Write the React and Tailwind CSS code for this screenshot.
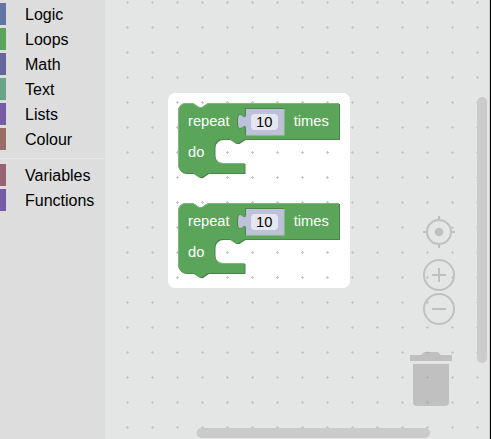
const categories = [
  { name: 'Logic', color: 'bg-[#6475a3]' },
  { name: 'Loops', color: 'bg-[#5ba55b]' },
  { name: 'Math', color: 'bg-[#65669c]' },
  { name: 'Text', color: 'bg-[#6ba587]' },
  { name: 'Lists', color: 'bg-[#775ca5]' },
  { name: 'Colour', color: 'bg-[#996c65]' },
];

const extras = [
  { name: 'Variables', color: 'bg-[#996277]' },
  { name: 'Functions', color: 'bg-[#775ca5]' },
];

function Category({ name, color }) {
  return (
    <li className="flex h-[22px] items-center">
      <span className={`h-full w-1.5 ${color}`} />
      <span className="ml-[19px] pt-0.5 text-base leading-[22px] text-black">{name}</span>
    </li>
  );
}

function Toolbox() {
  return (
    <nav className="w-[105px] shrink-0 bg-[#dddddd] pt-[3px]">
      <ul className="flex flex-col gap-[3px]">
        {categories.map((c) => <Category key={c.name} {...c} />)}
      </ul>
      <div className="mt-2 mb-[5px] h-px bg-[#e6e6e6]" />
      <ul className="flex flex-col gap-[3px]">
        {extras.map((c) => <Category key={c.name} {...c} />)}
      </ul>
    </nav>
  );
}

const outline =
  'M0,8 A8,8 0 0 1 8,0 H15 l6,4 3,0 6,-4 H161 V36 H66.5 l-6,4 -3,0 -6,-4 h-7 a8,8 0 0 0 -8,8 v8 a8,8 0 0 0 8,8 H66.5 V70 H30 l-6,4 -3,0 -6,-4 H8 a8,8 0 0 1 -8,-8 z';

function RepeatBlock({ x, y }) {
  return (
    <g transform={`translate(${x} ${y})`} fontSize="14.67">
      <path d={outline} transform="translate(1 1)" fill="#498449" />
      <path d={outline} fill="#5ba55b" />
      <path d="M.5,62 V8 A7.5,7.5 0 0 1 8,.5 H15 l6,4 3,0 6,-4 H160.5 M38.8,57.7 a8,8 0 0 0 5.7,2.8 H66" fill="none" stroke="#7cb77c" />
      <path d="M106,5.5 H67.5 V11 c0,10 -8,-8 -8,7.5 s8,-2.5 8,7.5 V32" fill="none" stroke="#498449" />
      <path d="M68,6 H106 V32 H68 V26 c0,-10 -8,8 -8,-7.5 s8,2.5 8,-7.5 z" fill="#bdc2da" />
      <path d="M68,32.3 H106.3 V6" fill="none" stroke="#8cc08c" />
      <rect x="73" y="11" width="27" height="16" rx="4" fill="#e5e7f0" />
      <text x="10" y="23" fill="#fff">repeat</text>
      <text x="78" y="24" fill="#000">10</text>
      <text x="115.7" y="23" fill="#fff">times</text>
      <text x="10" y="54" fill="#fff">do</text>
    </g>
  );
}

function Workspace() {
  return (
    <svg width="384" height="439" viewBox="105 0 384 439" className="block shrink-0 bg-[#e4e6e5]">
      <defs>
        <pattern id="grid" x="115" y="-10" width="25" height="25" patternUnits="userSpaceOnUse">
          <path d="M11,12.5 h3 M12.5,11 v3" stroke="#c6c6c6" />
        </pattern>
      </defs>
      <rect x="168" y="93" width="182" height="195" rx="7" fill="#fff" />
      <rect x="105" width="384" height="439" fill="url(#grid)" />
      <RepeatBlock x={178} y={103} />
      <RepeatBlock x={178} y={203} />
      <g fill="none" stroke="#c0c0c0" strokeWidth="2">
        <circle cx="439" cy="232" r="12" />
        <path d="M439,216 v4 M439,244 v4 M423,232 h4 M451,232 h4" />
        <circle cx="439" cy="232" r="4.3" fill="#c0c0c0" stroke="none" />
        <circle cx="439" cy="275" r="15" />
        <path d="M432,275 h14 M439,268 v14" />
        <circle cx="439" cy="309" r="15" />
        <path d="M432,309 h14" />
      </g>
      <g fill="#c0c0c0">
        <path d="M410,355 h11 l3,-3 h14 l3,3 h11 v6 h-42 z" />
        <path d="M413,364 h36 v38 a4,4 0 0 1 -4,4 h-28 a4,4 0 0 1 -4,-4 z" />
      </g>
      <path d="M426,377.5 h3 M427.5,376 v3 M426,402.5 h3 M427.5,401 v3 M426,352.5 h3" stroke="#adaebc" />
      <rect x="477" y="97" width="10" height="266" rx="5" fill="#cbcbcb" />
      <rect x="196.5" y="428" width="233.5" height="10" rx="5" fill="#cbcbcb" />
    </svg>
  );
}

export default function App() {
  return (
    <div className="flex h-[439px] w-[491px] overflow-hidden bg-[#e4e6e5] font-['Liberation_Sans',Arial,sans-serif]">
      <Toolbox />
      <Workspace />
      <div className="w-px bg-[#c8c8c8]" />
      <div className="w-px bg-black" />
    </div>
  );
}
